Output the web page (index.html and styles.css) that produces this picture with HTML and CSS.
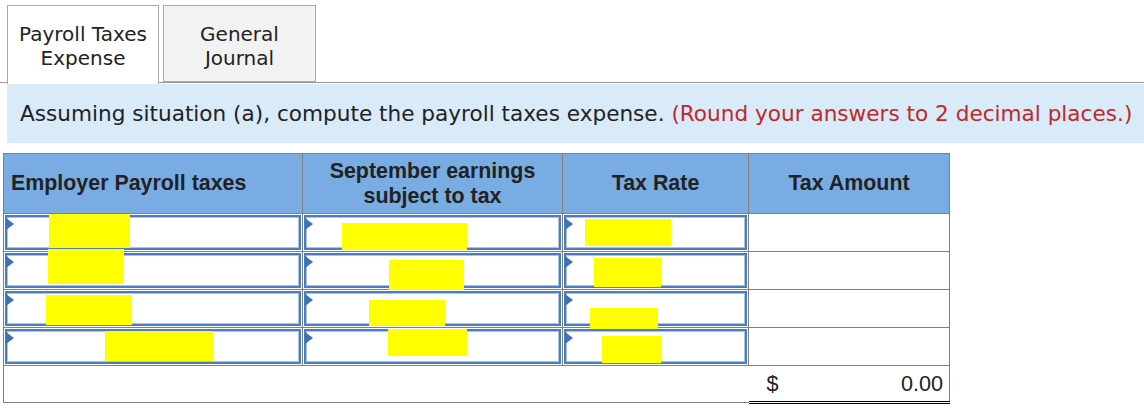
FILE: index.html
```html
<!DOCTYPE html>
<html>
<head>
<meta charset="utf-8">
<link rel="stylesheet" href="styles.css">
</head>
<body>
<div class="tabs">
  <div class="tab active">Payroll Taxes<br>Expense</div>
  <div class="tab">General<br>Journal</div>
</div>
<div class="instr">Assuming situation (a), compute the payroll taxes expense. <span class="red">(Round your answers to 2 decimal places.)</span></div>
<table class="grid">
  <colgroup>
    <col class="c1"><col class="c2"><col class="c3"><col class="c4">
  </colgroup>
  <thead>
    <tr>
      <th class="left">Employer Payroll taxes</th>
      <th>September earnings<br>subject to tax</th>
      <th>Tax Rate</th>
      <th>Tax Amount</th>
    </tr>
  </thead>
  <tbody>
    <tr>
      <td class="in"><div class="box"><span class="hl" style="left:42px;top:-3px;width:81px;height:34px"></span></div></td>
      <td class="in"><div class="box"><span class="hl" style="left:36px;top:6px;width:125px;height:27px"></span></div></td>
      <td class="in"><div class="box"><span class="hl" style="left:19px;top:2px;width:86px;height:27px"></span></div></td>
      <td class="amt"></td>
    </tr>
    <tr>
      <td class="in"><div class="box"><span class="hl" style="left:41px;top:-6px;width:76px;height:35px"></span></div></td>
      <td class="in"><div class="box"><span class="hl" style="left:83px;top:5px;width:75px;height:30px"></span></div></td>
      <td class="in"><div class="box"><span class="hl" style="left:28px;top:3px;width:67px;height:29px"></span></div></td>
      <td class="amt"></td>
    </tr>
    <tr>
      <td class="in"><div class="box"><span class="hl" style="left:39px;top:2px;width:86px;height:30px"></span></div></td>
      <td class="in"><div class="box"><span class="hl" style="left:63px;top:7px;width:76px;height:26px"></span></div></td>
      <td class="in"><div class="box"><span class="hl" style="left:24px;top:15px;width:68px;height:21px"></span></div></td>
      <td class="amt"></td>
    </tr>
    <tr>
      <td class="in"><div class="box"><span class="hl" style="left:98px;top:0px;width:108px;height:30px"></span></div></td>
      <td class="in"><div class="box"><span class="hl" style="left:82px;top:-2px;width:79px;height:27px"></span></div></td>
      <td class="in"><div class="box"><span class="hl" style="left:36px;top:5px;width:59px;height:27px"></span></div></td>
      <td class="amt"></td>
    </tr>
    <tr class="total">
      <td></td><td></td><td></td>
      <td class="sum"><span class="dollar">$</span><span class="val">0.00</span></td>
    </tr>
  </tbody>
</table>
</body>
</html>
```

FILE: styles.css
```css
html, body {
  margin: 0;
  padding: 0;
  background: #fff;
}
body {
  font-family: "DejaVu Sans", Verdana, sans-serif;
  color: #222;
}
.tabs {
  display: flex;
  align-items: flex-start;
  gap: 4px;
  padding: 5px 0 0 7px;
  border-bottom: 1px solid #999;
  height: 83px;
  box-sizing: border-box;
}
.tab {
  width: 153px;
  height: 77px;
  box-sizing: border-box;
  border: 1px solid #aaa;
  background: #f2f2f2;
  font-size: 20px;
  line-height: 24px;
  text-align: center;
  padding-top: 16px;
  color: #222;
}
.tab.active {
  width: 152px;
  background: #fff;
  border-bottom: none;
  height: 79px;
  position: relative;
}
.instr {
  margin: 1px 0 0 7px;
  height: 59px;
  background: #d9eaf8;
  font-size: 21.6px;
  line-height: 59px;
  padding-left: 13px;
  color: #222;
  white-space: nowrap;
}
.red {
  color: #c0282a;
}
.grid {
  margin: 10px 0 0 3px;
  border-collapse: collapse;
  border: 1px solid #808080;
  font-family: "Liberation Sans", Arial, sans-serif;
}
.c1 { width: 299px; }
.c2 { width: 260px; }
.c3 { width: 186px; }
.c4 { width: 201px; }
.grid th {
  background: #78ace2;
  height: 59px;
  font-size: 21.4px;
  font-weight: bold;
  line-height: 25px;
  color: #222;
  border: 1px solid #808080;
  padding: 0 6px;
  text-align: center;
}
.grid th.left {
  text-align: left;
  padding-left: 7px;
}
.grid td {
  border: 1px solid #808080;
  padding: 0;
}
.grid td.in {
  padding: 1px;
}
.box {
  position: relative;
  height: 31px;
  border: 2px solid #4a7dbe;
  box-shadow: inset 0 0 0 1px #a9c3e6;
  background: #fff;
}
.box::before {
  content: "";
  position: absolute;
  left: -1px;
  top: 1px;
  border-left: 8px solid #3c72b9;
  border-top: 6px solid transparent;
  border-bottom: 6px solid transparent;
}
.hl {
  position: absolute;
  background: #ffff00;
}
.grid tr.total td {
  height: 35px;
  border-left: none;
  border-right: none;
}
.grid tr.total td:first-child {
  border-left: 1px solid #808080;
}
.grid td.sum {
  border-top: 1px solid #000;
  border-left: 1px solid #808080;
  border-bottom: 3px double #000;
  font-size: 21.6px;
  color: #222;
  padding: 0 6px 0 18px;
}
.dollar {
  float: left;
}
.val {
  float: right;
}
```
